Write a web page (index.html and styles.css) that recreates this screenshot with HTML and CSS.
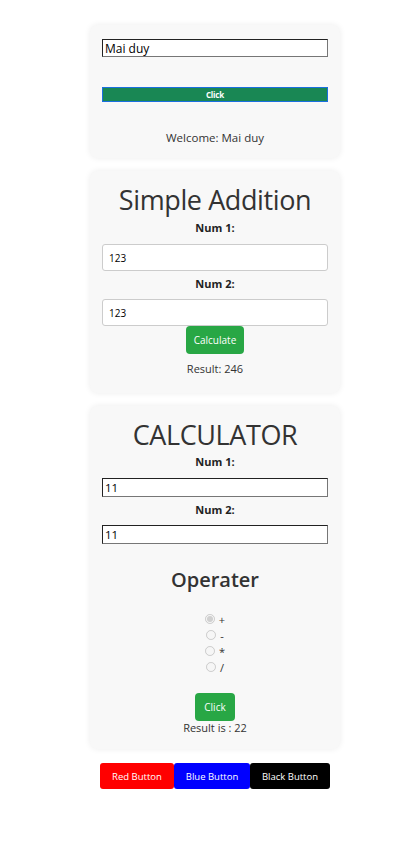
FILE: index.html
```html
<!DOCTYPE html>
<html>
<head>
<meta charset="utf-8">
<link rel="stylesheet" href="styles.css">
</head>
<body>
<div class="page">
  <div class="card card-welcome">
    <input class="plain-input" type="text" value="Mai duy">
    <button class="btn-wide">Click</button>
    <p class="welcome">Welcome: Mai duy</p>
  </div>

  <div class="card card-add">
    <h1 class="title">Simple Addition</h1>
    <label class="lbl lbl-first">Num 1:</label>
    <input class="soft-input" type="text" value="123">
    <label class="lbl lbl-next">Num 2:</label>
    <input class="soft-input soft-input-2" type="text" value="123">
    <button class="btn-green btn-calc">Calculate</button>
    <p class="result">Result: 246</p>
  </div>

  <div class="card card-calc">
    <h1 class="title">CALCULATOR</h1>
    <label class="lbl lbl-first2">Num 1:</label>
    <input class="plain-input calc-input" type="text" value="11">
    <label class="lbl lbl-next">Num 2:</label>
    <input class="plain-input calc-input calc-input-2" type="text" value="11">
    <h2 class="subtitle">Operater</h2>
    <div class="radios">
      <label class="radio-row"><input type="radio" name="op" checked disabled> +</label>
      <label class="radio-row"><input type="radio" name="op" disabled> -</label>
      <label class="radio-row"><input type="radio" name="op" disabled> *</label>
      <label class="radio-row"><input type="radio" name="op" disabled> /</label>
    </div>
    <button class="btn-green btn-click">Click</button>
    <p class="result-is">Result is : 22</p>
  </div>

  <div class="color-row">
    <button class="cbtn cbtn-red">Red Button</button>
    <button class="cbtn cbtn-blue">Blue Button</button>
    <button class="cbtn cbtn-black">Black Button</button>
  </div>
</div>
</body>
</html>
```
FILE: styles.css
```css
* { box-sizing: border-box; }
body {
  margin: 0;
  background: #ffffff;
  font-family: "Open Sans", "Noto Sans", sans-serif;
  color: #333;
}
.page {
  width: 250px;
  margin-left: 90px;
  padding-top: 25px;
  display: flex;
  flex-direction: column;
}
.card {
  background: #f8f8f8;
  border-radius: 8px;
  box-shadow: 0 0 6px rgba(0,0,0,0.08);
  padding: 0 12px;
  display: flex;
  flex-direction: column;
  align-items: center;
}
.card + .card { margin-top: 13px; }

.card-welcome { padding-top: 14px; padding-bottom: 13px; }
.plain-input {
  width: 226px;
  height: 18px;
  border: 1px solid #767676;
  border-top-color: #222;
  border-left-color: #222;
  padding: 0 2px;
  font-family: "Open Sans", sans-serif;
  font-size: 12px;
  color: #000;
  background: #fff;
  align-self: center;
}
.btn-wide {
  margin-top: 30px;
  width: 226px;
  height: 15px;
  border: 1px solid #1a6fe0;
  background: #198754;
  color: #fff;
  font-family: "Open Sans", sans-serif;
  font-weight: 700;
  font-size: 8px;
  line-height: 12px;
  padding: 0;
  letter-spacing: -0.2px;
}
.welcome {
  margin: 29px 0 0;
  font-size: 11.5px;
  line-height: 14px;
}

.card-add { padding-top: 12px; padding-bottom: 16px; }
.card-calc { padding-top: 12px; padding-bottom: 14px; }
.title {
  margin: 0;
  font-size: 27px;
  line-height: 34px;
  font-weight: 500;
  color: #333;
  letter-spacing: -0.4px;
}
.lbl {
  font-weight: 700;
  font-size: 11px;
  line-height: 16px;
  color: #222;
}
.lbl-first { margin-top: 3px; }
.lbl-first2 { margin-top: 2px; }
.lbl-next { margin-top: 5px; }
.soft-input {
  margin-top: 8px;
  width: 226px;
  height: 27px;
  border: 1px solid #ccc;
  border-radius: 3px;
  padding: 0 6px;
  font-family: "Open Sans", sans-serif;
  font-size: 10px;
  color: #000;
  background: #fff;
}
.soft-input-2 { margin-top: 7px; }
.btn-green {
  background: #28a745;
  color: #fff;
  border: none;
  border-radius: 4px;
  font-family: "Open Sans", sans-serif;
  font-size: 10px;
  padding: 0;
}
.btn-calc { width: 58px; height: 28px; }
.result {
  margin: 7px 0 0;
  font-size: 11px;
  line-height: 16px;
}
.calc-input { margin-top: 8px; height: 19px; font-size: 11.5px; }
.calc-input-2 { margin-top: 7px; }
.subtitle {
  margin: 22px 0 0;
  font-size: 20px;
  line-height: 28px;
  font-weight: 600;
  color: #333;
}
.radios {
  margin-top: 17px;
  display: flex;
  flex-direction: column;
  align-items: center;
}
.radio-row {
  height: 16px;
  display: flex;
  align-items: center;
  gap: 2px;
  font-size: 11px;
  color: #333;
}
.radio-row input {
  width: 10px;
  height: 10px;
  margin: 0 2px 0 0;
}
.btn-click { margin-top: 18px; width: 40px; height: 28px; }
.result-is {
  margin: 0;
  font-size: 11px;
  line-height: 14px;
}

.color-row {
  margin-top: 14px;
  display: flex;
  justify-content: center;
  padding-left: 0;
}
.cbtn {
  height: 26px;
  border: none;
  border-radius: 3px;
  color: #fff;
  font-family: "Open Sans", sans-serif;
  font-size: 9.5px;
  padding: 0;
}
.cbtn-red { background: #ff0000; width: 74px; }
.cbtn-blue { background: #0000ff; width: 76px; }
.cbtn-black { background: #000; width: 80px; }
```
